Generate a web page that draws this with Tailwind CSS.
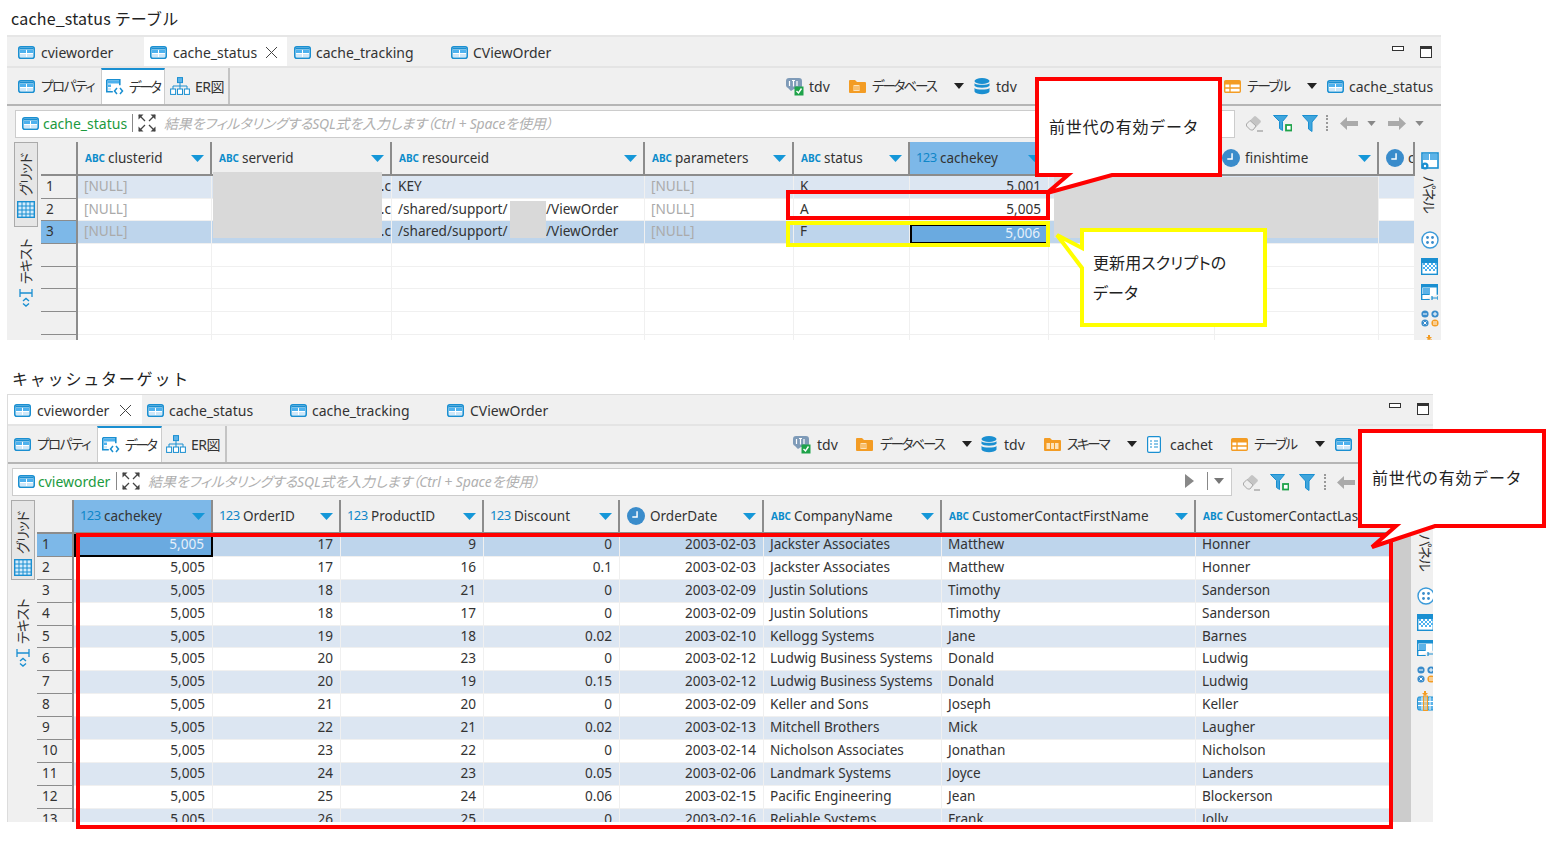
<!DOCTYPE html>
<html lang="ja">
<head>
<meta charset="utf-8">
<script src="https://cdn.jsdelivr.net/npm/@tailwindcss/browser@4"></script>
</head>
<body class="bg-white">
<svg class="hidden" width="0" height="0">
  <symbol id="t" viewBox="0 0 17 13"><rect x=".8" y=".8" width="15.400" height="11.400" rx="2" fill="#fff" stroke="#1a8fd1" stroke-width="1.600"/><rect x="1.500" y="1.500" width="14" height="2" fill="#1a8fd1"/><rect x="2" y="3.800" width="6" height="3.200" fill="#4db1ee"/><rect x="9" y="3.800" width="6" height="3.200" fill="#4db1ee"/><rect x="2" y="8" width="6" height="3" fill="#cfe8f9"/><rect x="9" y="8" width="6" height="3" fill="#cfe8f9"/></symbol>
  <symbol id="d" viewBox="0 0 18 16"><path d="M.8.800h13v5.500M.8.800v12h6" fill="none" stroke="#1a8fd1" stroke-width="1.600"/><rect x="1.500" y="1.500" width="11.500" height="3" fill="#4db1ee"/><rect x="2" y="5.500" width="3" height="2.500" fill="#4db1ee"/><rect x="2" y="9" width="3" height="2.500" fill="#cfe8f9"/><path d="M11 9l-2.500 3 2.500 3M14 9l2.500 3-2.500 3" fill="none" stroke="#1a8fd1" stroke-width="1.500"/></symbol>
  <symbol id="e" viewBox="0 0 20 18"><rect x="7.500" y=".6" width="5" height="5" fill="#5db3e8" stroke="#1a8fd1"/><path d="M10 6v3M3 12V9h14v3M10 9v3" fill="none" stroke="#1a8fd1"/><rect x=".6" y="12" width="5" height="5.400" fill="#fff" stroke="#1a8fd1"/><rect x="7.500" y="12" width="5" height="5.400" fill="#fff" stroke="#1a8fd1"/><rect x="14.400" y="12" width="5" height="5.400" fill="#fff" stroke="#1a8fd1"/></symbol>
  <symbol id="c" viewBox="0 0 18 19"><path d="M3 1h10a3 3 0 0 1 3 3v5a3 3 0 0 1-3 3H8l-3 2-3-3a3 3 0 0 1-2-3V4a3 3 0 0 1 3-3z" fill="#7f9bb8"/><path d="M3.500 4v5M6 3.500h3M7.500 3.500v6M11 4v5" stroke="#fff" stroke-width="1.200"/><rect x="8.500" y="9.500" width="9" height="9" fill="#1fa34a"/><path d="M10.500 14l2 2 3-4.500" fill="none" stroke="#fff" stroke-width="1.400"/></symbol>
  <symbol id="f" viewBox="0 0 17 14"><path d="M0 2a1 1 0 0 1 1-1h5l2 2h8a1 1 0 0 1 1 1v9a1 1 0 0 1-1 1H1a1 1 0 0 1-1-1z" fill="#f39c24"/><rect x="4" y="6" width="7" height="6" rx="1.500" fill="#fde3bb"/><path d="M4 8h7M4 10h7" stroke="#f39c24"/></symbol>
  <symbol id="y" viewBox="0 0 16 17"><ellipse cx="8" cy="3" rx="7.500" ry="3" fill="#1a8fd1"/><path d="M.5 5.200c1.500 2 13.500 2 15 0v2.600c-1.500 2.600-13.500 2.600-15 0zM.5 10c1.500 2 13.500 2 15 0v3.500c-1.500 3.600-13.500 3.600-15 0z" fill="#1a8fd1"/></symbol>
  <symbol id="s" viewBox="0 0 17 14"><path d="M0 2a1 1 0 0 1 1-1h5l2 2h8a1 1 0 0 1 1 1v9a1 1 0 0 1-1 1H1a1 1 0 0 1-1-1z" fill="#f39c24"/><path d="M2.500 6h12v6h-12z" fill="#fde3bb"/><path d="M6.500 6v6M10.500 6v6" stroke="#f39c24"/></symbol>
  <symbol id="n" viewBox="0 0 14 17"><path d="M.6 2A1.400 1.400 0 0 1 2 .6h10A1.400 1.400 0 0 1 13.400 2v13a1.400 1.400 0 0 1-1.400 1.400H2A1.400 1.400 0 0 1 .6 15z" fill="#fff" stroke="#1a8fd1" stroke-width="1.200"/><path d="M3 5h2M3 8h2M3 11h2M7 5h4M7 8h4M7 11h4" stroke="#1a8fd1"/></symbol>
  <symbol id="o" viewBox="0 0 17 13"><rect x=".7" y=".7" width="15.600" height="11.600" rx="1" fill="#fff" stroke="#f39c24" stroke-width="1.400"/><rect x="1" y="1" width="15" height="3.500" fill="#f39c24"/><path d="M6 4v8M1 8h15" stroke="#f39c24" stroke-width="1.300"/></symbol>
  <symbol id="tri" viewBox="0 0 10 6"><path d="M0 0h10L5 6z" fill="currentColor"/></symbol>
  <symbol id="sort" viewBox="0 0 13 7"><path d="M0 0h13L6.500 7z" fill="#1597d8"/></symbol>
  <symbol id="clk" viewBox="0 0 17 17"><circle cx="8.500" cy="8.500" r="8.500" fill="#3a8ccb"/><path d="M9.500 4v5.500H5" fill="none" stroke="#fff" stroke-width="1.400"/></symbol>
  <symbol id="x" viewBox="0 0 18 18"><path d="M.5.500h5l-5 5zM17.500.500v5l-5-5zM.5 17.500v-5l5 5zM17.500 17.500h-5l5-5z" fill="#444"/><path d="M1 1l6 6M17 1l-6 6M1 17l6-6M17 17l-6-6" stroke="#444" stroke-width="1.300"/></symbol>
  <symbol id="er" viewBox="0 0 18 17"><path d="M1.500 9L9 1.500a1.500 1.500 0 0 1 2 0l4.500 4a1.500 1.500 0 0 1 0 2L8 15H5.500L1.500 11a1.500 1.500 0 0 1 0-2z" fill="#c4c4c4"/><path d="M1.500 9l3.500-3.500 6 5.500L8 15H5.500L1.500 11z" fill="#eee" stroke="#aaa"/><path d="M12 16h6" stroke="#999" stroke-width="1.200"/></symbol>
  <symbol id="fl" viewBox="0 0 19 17"><path d="M.5.500h14l-5 6v9l-3-2v-7z" fill="#3fa5dc" stroke="#1a8fd1"/><rect x="13" y="10" width="5.500" height="5.500" fill="#fff" stroke="#1fa34a" stroke-width="1.800"/></symbol>
  <symbol id="fi" viewBox="0 0 16 17"><path d="M.5.500h15l-5.500 6.500v9.500l-3.500-2.500V7z" fill="#3fa5dc" stroke="#1a8fd1"/></symbol>
  <symbol id="al" viewBox="0 0 18 13"><path d="M0 6.500L7 0v4h11v5H7v4z" fill="#aaa"/></symbol>
  <symbol id="ar" viewBox="0 0 18 13"><path d="M18 6.500L11 0v4H0v5h11v4z" fill="#aaa"/></symbol>
  <symbol id="gr" viewBox="0 0 18 17"><rect x=".7" y=".7" width="16.600" height="15.600" fill="#d5ecfb" stroke="#1a8fd1" stroke-width="1.400"/><path d="M5 1v15M9 1v15M13 1v15M1 5h16M1 9h16M1 13h16" stroke="#1a8fd1"/></symbol>
  <symbol id="tx" viewBox="0 0 14 19"><path d="M1 1v8M13 1v8M1 5h12" fill="none" stroke="#1a8fd1" stroke-width="1.300"/><path d="M4 13l3-2.500 3 2.500M4 15.500l3 2.500 3-2.500" stroke="#1a8fd1" fill="none" stroke-width="1.400"/></symbol>
  <symbol id="p1" viewBox="0 0 18 20"><rect x="1" y="1" width="16" height="15" fill="#fff" stroke="#1a8fd1" stroke-width="1.600"/><rect x="2" y="2" width="6" height="6" fill="#5db3e8"/><rect x="9" y="2" width="7" height="6" fill="#5db3e8"/><circle cx="4" cy="14" r="3.500" fill="#1a8fd1"/><circle cx="4" cy="14" r="1.200" fill="#fff"/></symbol>
  <symbol id="p2" viewBox="0 0 18 18"><circle cx="9" cy="9" r="8" fill="#fff" stroke="#3a9ad9" stroke-width="1.400"/><circle cx="6.500" cy="6.500" r="1.400" fill="#3a8ccb"/><circle cx="11.500" cy="6.500" r="1.400" fill="#3a8ccb"/><circle cx="6.500" cy="11.500" r="1.400" fill="#3a8ccb"/><circle cx="11.500" cy="11.500" r="1.400" fill="#3a8ccb"/></symbol>
  <symbol id="p3" viewBox="0 0 17 17"><rect x=".7" y=".7" width="15.600" height="15.600" fill="#fff" stroke="#1a8fd1" stroke-width="1.400"/><rect x="1" y="1" width="15" height="4" fill="#1a8fd1"/><path d="M2 5h2v2H2zM6 5h2v2H6zM10 5h2v2h-2zM14 5h2v2h-2zM4 7h2v2H4zM8 7h2v2H8zM12 7h2v2h-2zM2 9h2v2H2zM6 9h2v2H6zM10 9h2v2h-2zM14 9h2v2h-2zM4 11h2v2H4zM8 11h2v2H8zM12 11h2v2h-2z" fill="#4db1ee"/></symbol>
  <symbol id="p4" viewBox="0 0 17 17"><path d="M.7 16V.7h15.600v10" fill="#fff" stroke="#1a8fd1" stroke-width="1.400"/><rect x="1" y="1" width="15" height="2.500" fill="#1a8fd1"/><rect x="2" y="4" width="7" height="6" fill="#5db3e8"/><path d="M.7 10.500h8M.7 15.500h8M11 14h6M11 12v4M17 12v4" stroke="#1a8fd1" stroke-width="1.200"/></symbol>
  <symbol id="p5" viewBox="0 0 18 17"><circle cx="4" cy="4" r="3.600" fill="#3a8ccb"/><circle cx="14" cy="4" r="3.600" fill="#3a8ccb"/><circle cx="4" cy="13" r="3.600" fill="#3a8ccb"/><circle cx="14" cy="13" r="3.600" fill="#f39c24"/><path d="M2 4h4M12 4h4M14 2v4M2.500 11.500l3 3M5.500 11.500l-3 3M12 12h4M12 14h4" stroke="#fff"/></symbol>
  <symbol id="p6" viewBox="0 0 18 20"><path d="M7 0h2v2h2L8 5 5 2h2z" fill="#f39c24"/><rect x=".6" y="6" width="16.800" height="13" rx="1.500" fill="#5db3e8" stroke="#1a8fd1"/><path d="M1 10.500h16M1 14.500h16M5 6v13M13 6v13" stroke="#fff"/><rect x="6.500" y="5" width="4" height="14.500" fill="#fbd08e" fill-opacity=".7" stroke="#f39c24"/></symbol>
</svg>

<div class="relative w-[1557px] h-[853px] overflow-hidden bg-white text-[14px] text-[#333] [font-family:'Noto_Sans','Noto_Sans_CJK_JP',sans-serif]">

  <div class="absolute left-[11px] top-[7px] text-[16px] leading-[22px] text-[#222] whitespace-nowrap [font-family:'Noto_Sans_CJK_JP',sans-serif] tracking-[0.2px]">cache_status テーブル</div>

  <!-- window 1 -->
  <div class="absolute left-[7px] top-[35px] w-[1434px] h-[305px] overflow-hidden bg-[#f0f0f0] border-t-2 border-[#e6e6e6] flex flex-col">
    <div class="h-[31px] shrink-0 flex pl-[4px] border-b-2 border-[#e4e4e4] relative">
      <div class="w-[133px] flex items-center pl-[7px] pt-[2px] gap-[6px]"><svg class="w-[17px] h-[13px]"><use href="#t"/></svg><span>cvieworder</span></div>
      <div class="w-[143px] flex items-center pl-[6px] pt-[2px] gap-[6px] bg-white"><svg class="w-[17px] h-[13px]"><use href="#t"/></svg><span class="w-[82px] whitespace-nowrap">cache_status</span><svg class="w-[13px] h-[13px] ml-[4px]" viewBox="0 0 13 13"><path d="M1 1l11 11M12 1L1 12" stroke="#444" stroke-width="1"/></svg></div>
      <div class="w-[164px] flex items-center pl-[7px] pt-[2px] gap-[5px]"><svg class="w-[17px] h-[13px]"><use href="#t"/></svg><span>cache_tracking</span></div>
      <div class="flex items-center pt-[2px] gap-[5px]"><svg class="w-[17px] h-[13px]"><use href="#t"/></svg><span>CViewOrder</span></div>
      <div class="absolute left-[1385px] top-[9px] w-[12px] h-[5px] border border-[#333] bg-white"></div>
      <div class="absolute left-[1413px] top-[9px] w-[12px] h-[12px] border border-[#333] border-t-[3px] bg-white"></div>
    </div>
    <div class="h-[38px] shrink-0 flex items-stretch pl-[4px] border-b-2 border-[#b5b5b5] text-[14px]">
      <div class="w-[90px] flex items-center pl-[7px] gap-[6px]"><svg class="w-[17px] h-[13px]"><use href="#t"/></svg><span class="[font-feature-settings:'palt'] text-[13.500px] tracking-[-1.400px] whitespace-nowrap">プロパティ</span></div>
      <div class="w-[64px] flex items-center pl-[4px] gap-[5px] bg-white border-t-2 border-x border-[#1a8fd1] border-x-[#ccc]"><svg class="w-[18px] h-[16px]"><use href="#d"/></svg><span class="[font-feature-settings:'palt'] text-[13.500px] tracking-[-2.400px] whitespace-nowrap">データ</span></div>
      <div class="w-[65px] flex items-center pl-[5px] gap-[5px] border-r-2 border-[#c4c4c4]"><svg class="w-[20px] h-[18px]"><use href="#e"/></svg><span class="tracking-[-0.5px] whitespace-nowrap">ER図</span></div>
      <div class="ml-[556px] flex items-center whitespace-nowrap">
        <svg class="w-[18px] h-[19px]"><use href="#c"/></svg><span class="ml-[5px] w-[40px]">tdv</span>
        <svg class="w-[17px] h-[14px]"><use href="#f"/></svg><span class="ml-[6px] w-[82px] [font-feature-settings:'palt'] text-[13.500px] tracking-[-2.100px]">データベース</span>
        <svg class="w-[10px] h-[6px] text-[#222]"><use href="#tri"/></svg>
        <svg class="ml-[10px] w-[16px] h-[17px]"><use href="#y"/></svg><span class="ml-[6px] w-[228px]">tdv</span>
        <svg class="w-[17px] h-[13px]"><use href="#o"/></svg><span class="ml-[6px] w-[60px] [font-feature-settings:'palt'] text-[13.500px] tracking-[-1.700px]">テーブル</span>
        <svg class="w-[10px] h-[6px] text-[#222]"><use href="#tri"/></svg>
        <svg class="ml-[10px] w-[17px] h-[13px]"><use href="#t"/></svg><span class="ml-[5px]">cache_status</span>
      </div>
    </div>
    <div class="h-[36px] shrink-0 flex items-center pl-[8px] pb-[2px]">
      <div class="mt-[2px] pb-[2px] w-[1220px] h-[28px] bg-white border border-[#ccc] flex items-center pl-[6px] whitespace-nowrap overflow-hidden">
        <svg class="w-[17px] h-[13px]"><use href="#t"/></svg><span class="ml-[4px] w-[89px] text-[#1b9a3e]">cache_status</span>
        <span class="w-px h-[18px] bg-[#888]"></span><svg class="ml-[5px] w-[18px] h-[18px]"><use href="#x"/></svg>
        <span class="ml-[8px] italic text-[#b0b0b0] [font-feature-settings:'palt'] tracking-[-0.170px]">結果をフィルタリングするSQL式を入力します（Ctrl + Spaceを使用）</span>
      </div>
      <svg class="ml-[10px] w-[18px] h-[17px]"><use href="#er"/></svg>
      <svg class="ml-[10px] w-[19px] h-[17px]"><use href="#fl"/></svg>
      <svg class="ml-[10px] w-[16px] h-[17px]"><use href="#fi"/></svg>
      <span class="ml-[8px] w-[2px] h-[16px] border-l-2 border-dotted border-[#999]"></span>
      <svg class="ml-[12px] w-[18px] h-[13px]"><use href="#al"/></svg>
      <svg class="ml-[9px] w-[9px] h-[5px] text-[#888]"><use href="#tri"/></svg>
      <svg class="ml-[12px] w-[18px] h-[13px]"><use href="#ar"/></svg>
      <svg class="ml-[9px] w-[9px] h-[5px] text-[#888]"><use href="#tri"/></svg>
    </div>
    <div class="flex-1 flex min-h-0">
      <div class="w-[34px] shrink-0 pl-[7px] flex flex-col">
        <div class="w-[24px] h-[85px] shrink-0 bg-[#e6e6e6] border border-[#aaa] flex flex-col items-center pt-[10px] gap-[4px]">
          <span class="[writing-mode:vertical-rl] rotate-180 [text-orientation:sideways] [font-feature-settings:'palt'] tracking-[-1px] leading-none h-[44px] whitespace-nowrap text-center">グリッド</span>
          <svg class="w-[18px] h-[17px]"><use href="#gr"/></svg>
        </div>
        <div class="w-[24px] flex flex-col items-center pt-[13px] gap-[4px]">
          <span class="[writing-mode:vertical-rl] rotate-180 [text-orientation:sideways] [font-feature-settings:'palt'] tracking-[-1px] leading-none h-[44px] whitespace-nowrap text-center">テキスト</span>
          <svg class="w-[14px] h-[19px]"><use href="#tx"/></svg>
        </div>
      </div>
      <div class="w-[1374px] shrink-0 grid grid-cols-[37px_134px_180px_253px_149px_116px_139px_166px_164px_36px] content-start bg-white overflow-hidden">
        <div class="col-span-full grid grid-cols-subgrid h-[34px] bg-[#f0f0f0] text-[13.500px] [&>div]:flex [&>div]:items-center [&>div]:border-r-2 [&>div]:border-b-2 [&>div]:border-r-[#8c8c8c] [&>div]:border-b-[#8c8c8c] [&>div]:pl-[7px] [&>div]:pr-[6px] [&>div]:gap-[4px] [&>div]:whitespace-nowrap">
          <div></div>
          <div><b class="text-[10px] text-[#0b8ccb] w-[19px]">ABC</b><span class="flex-1">clusterid</span><svg class="w-[13px] h-[7px]"><use href="#sort"/></svg></div>
          <div><b class="text-[10px] text-[#0b8ccb] w-[19px]">ABC</b><span class="flex-1">serverid</span><svg class="w-[13px] h-[7px]"><use href="#sort"/></svg></div>
          <div><b class="text-[10px] text-[#0b8ccb] w-[19px]">ABC</b><span class="flex-1">resourceid</span><svg class="w-[13px] h-[7px]"><use href="#sort"/></svg></div>
          <div><b class="text-[10px] text-[#0b8ccb] w-[19px]">ABC</b><span class="flex-1">parameters</span><svg class="w-[13px] h-[7px]"><use href="#sort"/></svg></div>
          <div><b class="text-[10px] text-[#0b8ccb] w-[19px]">ABC</b><span class="flex-1">status</span><svg class="w-[13px] h-[7px]"><use href="#sort"/></svg></div>
          <div class="bg-[#7db8e8]"><span class="-ml-[1px] text-[13px] tracking-[-0.6px] text-[#0f86c8] w-[20px]">123</span><span class="flex-1">cachekey</span><svg class="w-[13px] h-[7px]"><use href="#sort"/></svg></div>
          <div></div>
          <div><svg class="w-[18px] h-[18px] mr-[1px]"><use href="#clk"/></svg><span class="flex-1">finishtime</span><svg class="w-[13px] h-[7px]"><use href="#sort"/></svg></div>
          <div class="overflow-hidden"><svg class="w-[18px] h-[18px] shrink-0"><use href="#clk"/></svg><span>c</span></div>
        </div>
        <div class="col-span-full grid grid-cols-subgrid auto-rows-[22.700px] leading-[19px] text-[13.600px] [&>div>div]:border-r [&>div>div]:border-b [&>div>div]:border-[#f0f0f0] [&>div>div]:pl-[6px] [&>div>div]:pr-[7px] [&>div>div]:whitespace-nowrap [&>div>div]:overflow-hidden [&>div>div:first-child]:bg-[#f0f0f0] [&>div>div:first-child]:pl-[5px] [&>div>div:first-child]:border-r-2 [&>div>div:first-child]:border-r-[#8c8c8c] [&>div>div:first-child]:border-b-[#8c8c8c]">
          <div class="col-span-full grid grid-cols-subgrid bg-[#dce6f2]"><div>1</div><div class="text-[#aaa]">[NULL]</div><div class="text-right !pr-0">.c</div><div>KEY</div><div class="text-[#aaa]">[NULL]</div><div>K</div><div class="text-right">5,001</div><div></div><div></div><div></div></div>
          <div class="col-span-full grid grid-cols-subgrid bg-white"><div>2</div><div class="text-[#aaa]">[NULL]</div><div class="text-right !pr-0">.c</div><div><span class="inline-block w-[112px]">/shared/support/</span><span class="ml-[36px]">/ViewOrder</span></div><div class="text-[#aaa]">[NULL]</div><div>A</div><div class="text-right">5,005</div><div></div><div></div><div></div></div>
          <div class="col-span-full grid grid-cols-subgrid bg-[#bed5ec]"><div class="!bg-[#7db8e8]">3</div><div class="text-[#aaa]">[NULL]</div><div class="text-right !pr-0">.c</div><div><span class="inline-block w-[112px]">/shared/support/</span><span class="ml-[36px]">/ViewOrder</span></div><div class="text-[#aaa]">[NULL]</div><div>F</div><div class="mt-[3px] text-right !bg-[#6aaae0] !border-2 !border-black text-[#e6f0fa] !leading-[13px]">5,006</div><div></div><div></div><div></div></div>
          <div class="col-span-full grid grid-cols-subgrid"><div></div><div></div><div></div><div></div><div></div><div></div><div></div><div></div><div></div><div></div></div>
          <div class="col-span-full grid grid-cols-subgrid"><div></div><div></div><div></div><div></div><div></div><div></div><div></div><div></div><div></div><div></div></div>
          <div class="col-span-full grid grid-cols-subgrid"><div></div><div></div><div></div><div></div><div></div><div></div><div></div><div></div><div></div><div></div></div>
          <div class="col-span-full grid grid-cols-subgrid"><div></div><div></div><div></div><div></div><div></div><div></div><div></div><div></div><div></div><div></div></div>
          <div class="col-span-full grid grid-cols-subgrid"><div></div><div></div><div></div><div></div><div></div><div></div><div></div><div></div><div></div><div></div></div>
        </div>
      </div>
      <div class="w-[26px] shrink-0 flex flex-col pl-[6px] pt-[10px] overflow-hidden">
        <svg class="w-[18px] h-[20px] shrink-0"><use href="#p1"/></svg>
        <span class="mt-[4px] self-start ml-[1px] [writing-mode:vertical-rl] [text-orientation:sideways] [font-feature-settings:'palt'] tracking-[-1px] leading-none h-[32px] whitespace-nowrap shrink-0">パネル</span>
        <svg class="mt-[23px] w-[18px] h-[18px] shrink-0"><use href="#p2"/></svg>
        <svg class="mt-[9px] w-[17px] h-[17px] shrink-0"><use href="#p3"/></svg>
        <svg class="mt-[9px] w-[17px] h-[17px] shrink-0"><use href="#p4"/></svg>
        <svg class="mt-[9px] w-[18px] h-[17px] shrink-0"><use href="#p5"/></svg>
        <svg class="mt-[8px] w-[18px] h-[20px] shrink-0"><use href="#p6"/></svg>
      </div>
    </div>
  </div>

  <div class="absolute left-[12px] top-[367px] text-[16px] leading-[22px] text-[#222] whitespace-nowrap [font-family:'Noto_Sans_CJK_JP',sans-serif] tracking-[1.800px]">キャッシュターゲット</div>

  <!-- window 2 -->
  <div class="absolute left-[7px] top-[394px] w-[1426px] h-[428px] overflow-hidden bg-[#f0f0f0] border-t border-l border-[#dcdcdc] flex flex-col">
    <div class="h-[31px] shrink-0 flex border-b-2 border-[#e4e4e4] relative">
      <div class="w-[134px] flex items-center pl-[6px] pt-[2px] gap-[6px] bg-white"><svg class="w-[17px] h-[13px]"><use href="#t"/></svg><span class="w-[71px] whitespace-nowrap">cvieworder</span><svg class="w-[13px] h-[13px] ml-[5px]" viewBox="0 0 13 13"><path d="M1 1l11 11M12 1L1 12" stroke="#444" stroke-width="1"/></svg></div>
      <div class="w-[142px] flex items-center pl-[5px] pt-[2px] gap-[5px]"><svg class="w-[17px] h-[13px]"><use href="#t"/></svg><span>cache_status</span></div>
      <div class="w-[163px] flex items-center pl-[6px] pt-[2px] gap-[5px]"><svg class="w-[17px] h-[13px]"><use href="#t"/></svg><span>cache_tracking</span></div>
      <div class="flex items-center pt-[2px] gap-[6px]"><svg class="w-[17px] h-[13px]"><use href="#t"/></svg><span>CViewOrder</span></div>
      <div class="absolute left-[1381px] top-[8px] w-[12px] h-[5px] border border-[#333] bg-white"></div>
      <div class="absolute left-[1409px] top-[8px] w-[12px] h-[12px] border border-[#333] border-t-[3px] bg-white"></div>
    </div>
    <div class="h-[38px] shrink-0 flex items-stretch border-b-2 border-[#b5b5b5]">
      <div class="w-[89px] flex items-center pl-[6px] gap-[6px]"><svg class="w-[17px] h-[13px]"><use href="#t"/></svg><span class="[font-feature-settings:'palt'] text-[13.500px] tracking-[-1.400px] whitespace-nowrap">プロパティ</span></div>
      <div class="w-[65px] flex items-center pl-[4px] gap-[5px] bg-white border-t-2 border-x border-[#1a8fd1] border-x-[#ccc]"><svg class="w-[18px] h-[16px]"><use href="#d"/></svg><span class="[font-feature-settings:'palt'] text-[13.500px] tracking-[-2.400px] whitespace-nowrap">データ</span></div>
      <div class="w-[65px] flex items-center pl-[4px] gap-[5px] border-r-2 border-[#c4c4c4]"><svg class="w-[20px] h-[18px]"><use href="#e"/></svg><span class="tracking-[-0.5px] whitespace-nowrap">ER図</span></div>
      <div class="ml-[566px] flex items-center whitespace-nowrap">
        <svg class="w-[18px] h-[19px]"><use href="#c"/></svg><span class="ml-[6px] w-[39px]">tdv</span>
        <svg class="w-[17px] h-[14px]"><use href="#f"/></svg><span class="ml-[7px] w-[82px] [font-feature-settings:'palt'] text-[13.500px] tracking-[-2.100px]">データベース</span>
        <svg class="w-[10px] h-[6px] text-[#222]"><use href="#tri"/></svg>
        <svg class="ml-[9px] w-[16px] h-[17px]"><use href="#y"/></svg><span class="ml-[7px] w-[40px]">tdv</span>
        <svg class="w-[17px] h-[14px]"><use href="#s"/></svg><span class="ml-[6px] w-[60px] [font-feature-settings:'palt'] text-[13.500px] tracking-[-2.200px]">スキーマ</span>
        <svg class="w-[10px] h-[6px] text-[#222]"><use href="#tri"/></svg>
        <svg class="ml-[10px] w-[14px] h-[17px]"><use href="#n"/></svg><span class="ml-[9px] w-[61px]">cachet</span>
        <svg class="w-[17px] h-[13px]"><use href="#o"/></svg><span class="ml-[6px] w-[61px] [font-feature-settings:'palt'] text-[13.500px] tracking-[-1.700px]">テーブル</span>
        <svg class="w-[10px] h-[6px] text-[#222]"><use href="#tri"/></svg>
        <svg class="ml-[10px] w-[17px] h-[13px]"><use href="#t"/></svg>
      </div>
    </div>
    <div class="h-[36px] shrink-0 flex items-center pl-[4px]">
      <div class="pb-[2px] w-[1220px] h-[28px] bg-white border border-[#ccc] flex items-center pl-[5px] whitespace-nowrap overflow-hidden">
        <svg class="w-[17px] h-[13px]"><use href="#t"/></svg><span class="ml-[3px] w-[78px] text-[#1b9a3e]">cvieworder</span>
        <span class="w-px h-[18px] bg-[#888]"></span><svg class="ml-[5px] w-[18px] h-[18px]"><use href="#x"/></svg>
        <span class="ml-[8px] w-[1037px] italic text-[#b0b0b0] [font-feature-settings:'palt'] tracking-[-0.100px]">結果をフィルタリングするSQL式を入力します（Ctrl + Spaceを使用）</span>
        <svg class="w-[9px] h-[14px]" viewBox="0 0 9 14"><path d="M0 0l9 7-9 7z" fill="#888"/></svg>
        <span class="ml-[13px] w-px h-[18px] bg-[#888]"></span>
        <svg class="ml-[5px] w-[12px] h-[6px] text-[#777]"><use href="#tri"/></svg>
      </div>
      <svg class="ml-[10px] w-[18px] h-[17px]"><use href="#er"/></svg>
      <svg class="ml-[10px] w-[19px] h-[17px]"><use href="#fl"/></svg>
      <svg class="ml-[10px] w-[16px] h-[17px]"><use href="#fi"/></svg>
      <span class="ml-[9px] w-[2px] h-[16px] border-l-2 border-dotted border-[#999]"></span>
      <svg class="ml-[11px] w-[18px] h-[13px]"><use href="#al"/></svg>
    </div>
    <div class="flex-1 flex min-h-0">
      <div class="w-[29px] shrink-0 pl-[3px] flex flex-col">
        <div class="w-[24px] h-[80px] shrink-0 bg-[#e6e6e6] border border-[#aaa] flex flex-col items-center pt-[10px] gap-[4px]">
          <span class="[writing-mode:vertical-rl] rotate-180 [text-orientation:sideways] [font-feature-settings:'palt'] tracking-[-1px] leading-none h-[44px] whitespace-nowrap text-center">グリッド</span>
          <svg class="w-[18px] h-[17px]"><use href="#gr"/></svg>
        </div>
        <div class="w-[24px] flex flex-col items-center pt-[20px] gap-[4px]">
          <span class="[writing-mode:vertical-rl] rotate-180 [text-orientation:sideways] [font-feature-settings:'palt'] tracking-[-1px] leading-none h-[44px] whitespace-nowrap text-center">テキスト</span>
          <svg class="w-[14px] h-[19px]"><use href="#tx"/></svg>
        </div>
      </div>
      <div class="w-[1356px] shrink-0 grid grid-cols-[37px_139px_128px_143px_136px_144px_178px_254px_197px] content-start bg-white overflow-hidden">
        <div class="col-span-full grid grid-cols-subgrid h-[34px] bg-[#f0f0f0] text-[13.500px] [&>div]:flex [&>div]:items-center [&>div]:border-r-2 [&>div]:border-b-2 [&>div]:border-r-[#8c8c8c] [&>div]:border-b-[#8c8c8c] [&>div]:pl-[7px] [&>div]:pr-[6px] [&>div]:gap-[4px] [&>div]:whitespace-nowrap [&>div]:overflow-hidden">
          <div></div>
          <div class="bg-[#7db8e8]"><span class="-ml-[1px] text-[13px] tracking-[-0.6px] text-[#0f86c8] w-[20px]">123</span><span class="flex-1">cachekey</span><svg class="w-[13px] h-[7px]"><use href="#sort"/></svg></div>
          <div><span class="-ml-[1px] text-[13px] tracking-[-0.6px] text-[#0f86c8] w-[20px]">123</span><span class="flex-1">OrderID</span><svg class="w-[13px] h-[7px]"><use href="#sort"/></svg></div>
          <div><span class="-ml-[1px] text-[13px] tracking-[-0.6px] text-[#0f86c8] w-[20px]">123</span><span class="flex-1">ProductID</span><svg class="w-[13px] h-[7px]"><use href="#sort"/></svg></div>
          <div><span class="-ml-[1px] text-[13px] tracking-[-0.6px] text-[#0f86c8] w-[20px]">123</span><span class="flex-1">Discount</span><svg class="w-[13px] h-[7px]"><use href="#sort"/></svg></div>
          <div><svg class="w-[18px] h-[18px] mr-[1px]"><use href="#clk"/></svg><span class="flex-1">OrderDate</span><svg class="w-[13px] h-[7px]"><use href="#sort"/></svg></div>
          <div><b class="text-[10px] text-[#0b8ccb] w-[19px]">ABC</b><span class="flex-1">CompanyName</span><svg class="w-[13px] h-[7px]"><use href="#sort"/></svg></div>
          <div><b class="text-[10px] text-[#0b8ccb] w-[19px]">ABC</b><span class="flex-1">CustomerContactFirstName</span><svg class="w-[13px] h-[7px]"><use href="#sort"/></svg></div>
          <div><b class="text-[10px] text-[#0b8ccb] w-[19px]">ABC</b><span class="flex-1">CustomerContactLastName</span></div>
        </div>
        <div class="col-span-full grid grid-cols-subgrid auto-rows-[22.900px] leading-[19px] text-[13.600px] [&>div:nth-child(odd)]:bg-[#dce6f2] [&>div:nth-child(even)]:bg-white [&>div>div]:border-r [&>div>div]:border-b [&>div>div]:border-[#f0f0f0] [&>div>div]:pl-[6px] [&>div>div]:pr-[7px] [&>div>div]:whitespace-nowrap [&>div>div]:overflow-hidden [&>div>div:nth-child(n+2):nth-child(-n+6)]:text-right [&>div>div:first-child]:bg-[#f0f0f0] [&>div>div:first-child]:pl-[5px] [&>div>div:first-child]:border-r-2 [&>div>div:first-child]:border-r-[#8c8c8c] [&>div>div:first-child]:border-b-[#8c8c8c]">
          <div class="col-span-full grid grid-cols-subgrid !bg-[#bed5ec]"><div class="!bg-[#7db8e8]">1</div><div class="!bg-[#6aaae0] !border-2 !border-black text-[#e6f0fa] !leading-[16px]">5,005</div><div>17</div><div>9</div><div>0</div><div>2003-02-03</div><div>Jackster Associates</div><div>Matthew</div><div>Honner</div></div>
          <div class="col-span-full grid grid-cols-subgrid"><div>2</div><div>5,005</div><div>17</div><div>16</div><div>0.1</div><div>2003-02-03</div><div>Jackster Associates</div><div>Matthew</div><div>Honner</div></div>
          <div class="col-span-full grid grid-cols-subgrid"><div>3</div><div>5,005</div><div>18</div><div>21</div><div>0</div><div>2003-02-09</div><div>Justin Solutions</div><div>Timothy</div><div>Sanderson</div></div>
          <div class="col-span-full grid grid-cols-subgrid"><div>4</div><div>5,005</div><div>18</div><div>17</div><div>0</div><div>2003-02-09</div><div>Justin Solutions</div><div>Timothy</div><div>Sanderson</div></div>
          <div class="col-span-full grid grid-cols-subgrid"><div>5</div><div>5,005</div><div>19</div><div>18</div><div>0.02</div><div>2003-02-10</div><div>Kellogg Systems</div><div>Jane</div><div>Barnes</div></div>
          <div class="col-span-full grid grid-cols-subgrid"><div>6</div><div>5,005</div><div>20</div><div>23</div><div>0</div><div>2003-02-12</div><div>Ludwig Business Systems</div><div>Donald</div><div>Ludwig</div></div>
          <div class="col-span-full grid grid-cols-subgrid"><div>7</div><div>5,005</div><div>20</div><div>19</div><div>0.15</div><div>2003-02-12</div><div>Ludwig Business Systems</div><div>Donald</div><div>Ludwig</div></div>
          <div class="col-span-full grid grid-cols-subgrid"><div>8</div><div>5,005</div><div>21</div><div>20</div><div>0</div><div>2003-02-09</div><div>Keller and Sons</div><div>Joseph</div><div>Keller</div></div>
          <div class="col-span-full grid grid-cols-subgrid"><div>9</div><div>5,005</div><div>22</div><div>21</div><div>0.02</div><div>2003-02-13</div><div>Mitchell Brothers</div><div>Mick</div><div>Laugher</div></div>
          <div class="col-span-full grid grid-cols-subgrid"><div>10</div><div>5,005</div><div>23</div><div>22</div><div>0</div><div>2003-02-14</div><div>Nicholson Associates</div><div>Jonathan</div><div>Nicholson</div></div>
          <div class="col-span-full grid grid-cols-subgrid"><div>11</div><div>5,005</div><div>24</div><div>23</div><div>0.05</div><div>2003-02-06</div><div>Landmark Systems</div><div>Joyce</div><div>Landers</div></div>
          <div class="col-span-full grid grid-cols-subgrid"><div>12</div><div>5,005</div><div>25</div><div>24</div><div>0.06</div><div>2003-02-15</div><div>Pacific Engineering</div><div>Jean</div><div>Blockerson</div></div>
          <div class="col-span-full grid grid-cols-subgrid"><div>13</div><div>5,005</div><div>26</div><div>25</div><div>0</div><div>2003-02-16</div><div>Reliable Systems</div><div>Frank</div><div>Jolly</div></div>
        </div>
      </div>
      <div class="w-[18px] shrink-0 bg-[#f0f0f0] flex flex-col"><div class="h-[34px]"></div><div class="flex-1 bg-[#cccccc]"></div></div>
      <div class="w-[22px] shrink-0 flex flex-col pl-[6px] pt-[12px] overflow-hidden">
        <svg class="w-[18px] h-[20px] shrink-0"><use href="#p1"/></svg>
        <span class="mt-[2px] self-start ml-[1px] [writing-mode:vertical-rl] [text-orientation:sideways] [font-feature-settings:'palt'] tracking-[-1px] leading-none h-[32px] whitespace-nowrap shrink-0">パネル</span>
        <svg class="mt-[21px] w-[18px] h-[18px] shrink-0"><use href="#p2"/></svg>
        <svg class="mt-[9px] w-[17px] h-[17px] shrink-0"><use href="#p3"/></svg>
        <svg class="mt-[9px] w-[17px] h-[17px] shrink-0"><use href="#p4"/></svg>
        <svg class="mt-[9px] w-[18px] h-[17px] shrink-0"><use href="#p5"/></svg>
        <svg class="mt-[8px] w-[18px] h-[20px] shrink-0"><use href="#p6"/></svg>
      </div>
    </div>
  </div>

  <!-- redactions -->
  <div class="absolute left-[213px] top-[172px] w-[169px] h-[66px] bg-[#d9d9d9]"></div>
  <div class="absolute left-[510px] top-[201px] w-[36px] h-[37px] bg-[#d9d9d9]"></div>
  <div class="absolute left-[1054px] top-[177px] w-[324px] h-[61px] bg-[#d9d9d9]"></div>

  <!-- annotation shapes -->
  <svg class="absolute left-0 top-0 w-[1557px] h-[853px] pointer-events-none" viewBox="0 0 1557 853" fill="none" stroke-width="4">
    <rect x="788" y="192" width="260" height="26" stroke="#f00"/>
    <rect x="788" y="223" width="260" height="22" stroke="#ff0"/>
    <path d="M1037 79H1220V175H1112L1047 193L1068 175H1037Z" fill="#fff" stroke="#f00"/>
    <path d="M1082 230H1265V325H1082V268L1057 235L1082 248Z" fill="#fff" stroke="#ff0"/>
    <rect x="78" y="535" width="1313" height="292" stroke="#f00"/>
    <path d="M1360 431H1544V526H1435L1372 547L1396 526H1360Z" fill="#fff" stroke="#f00"/>
  </svg>
  <div class="absolute left-[1049px] top-[114px] text-[16px] leading-[24px] text-[#222] whitespace-nowrap [font-family:'Noto_Sans_CJK_JP',sans-serif] tracking-[0.7px]">前世代の有効データ</div>
  <div class="absolute left-[1093px] top-[247px] text-[16px] leading-[30px] text-[#222] whitespace-nowrap [font-family:'Noto_Sans_CJK_JP',sans-serif] [font-feature-settings:'palt'] tracking-[0.1px]">更新用スクリプトの<br>データ</div>
  <div class="absolute left-[1372px] top-[465px] text-[16px] leading-[24px] text-[#222] whitespace-nowrap [font-family:'Noto_Sans_CJK_JP',sans-serif] tracking-[0.7px]">前世代の有効データ</div>
</div>
</body>
</html>
